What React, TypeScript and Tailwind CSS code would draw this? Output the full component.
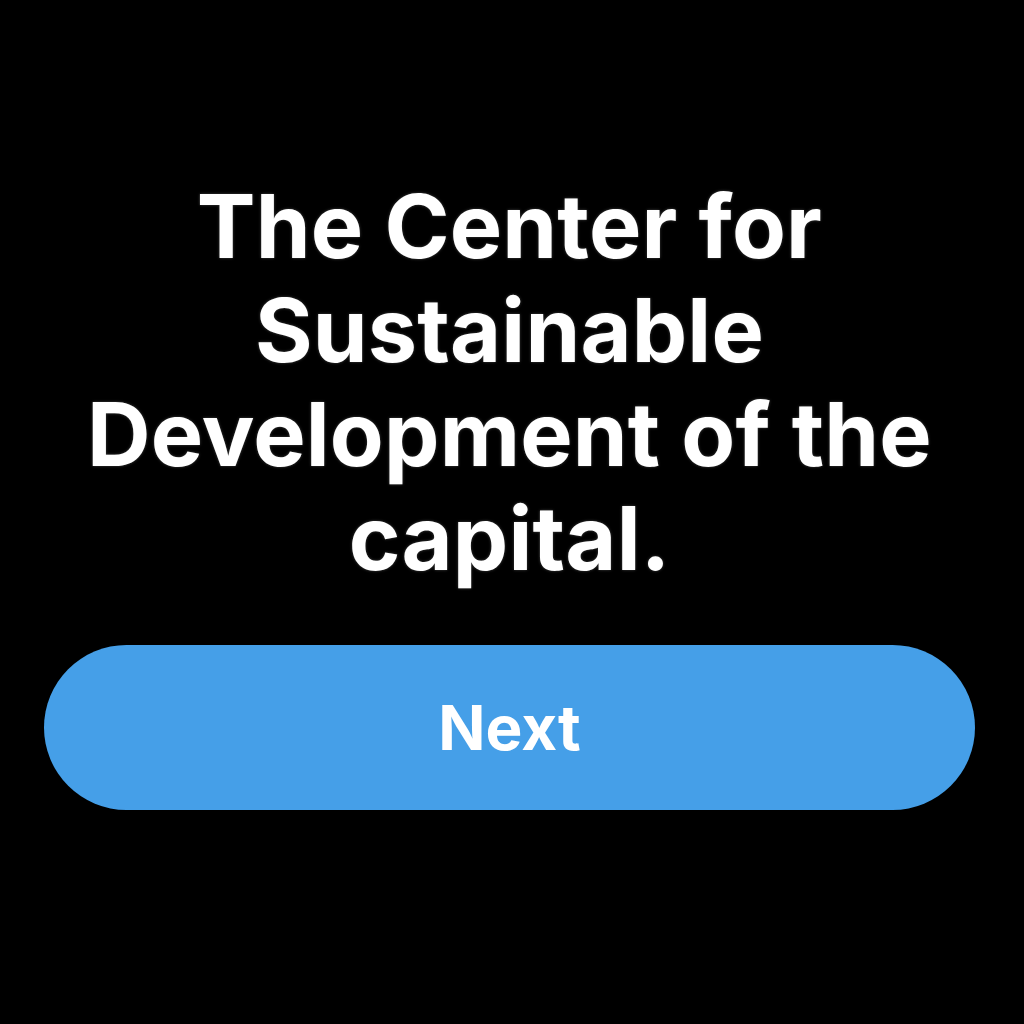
import React from 'react';

const App: React.FC = () => {
  return (
    <div className="min-h-screen w-full bg-black flex flex-col items-center pl-[44px] pr-[49px] pt-[174px] font-['Inter','Liberation_Sans',sans-serif]">
      <h1 className="text-center text-white font-bold text-[88px] leading-[104px] tracking-[0.2px] [text-shadow:0_0_3px_#444]">
        The Center for Sustainable Development of the capital.
      </h1>
      <button className="mt-[55px] w-full h-[165px] rounded-full bg-[#459fe8] text-white font-bold text-[62px] flex items-center justify-center">
        Next
      </button>
    </div>
  );
};

export default App;
